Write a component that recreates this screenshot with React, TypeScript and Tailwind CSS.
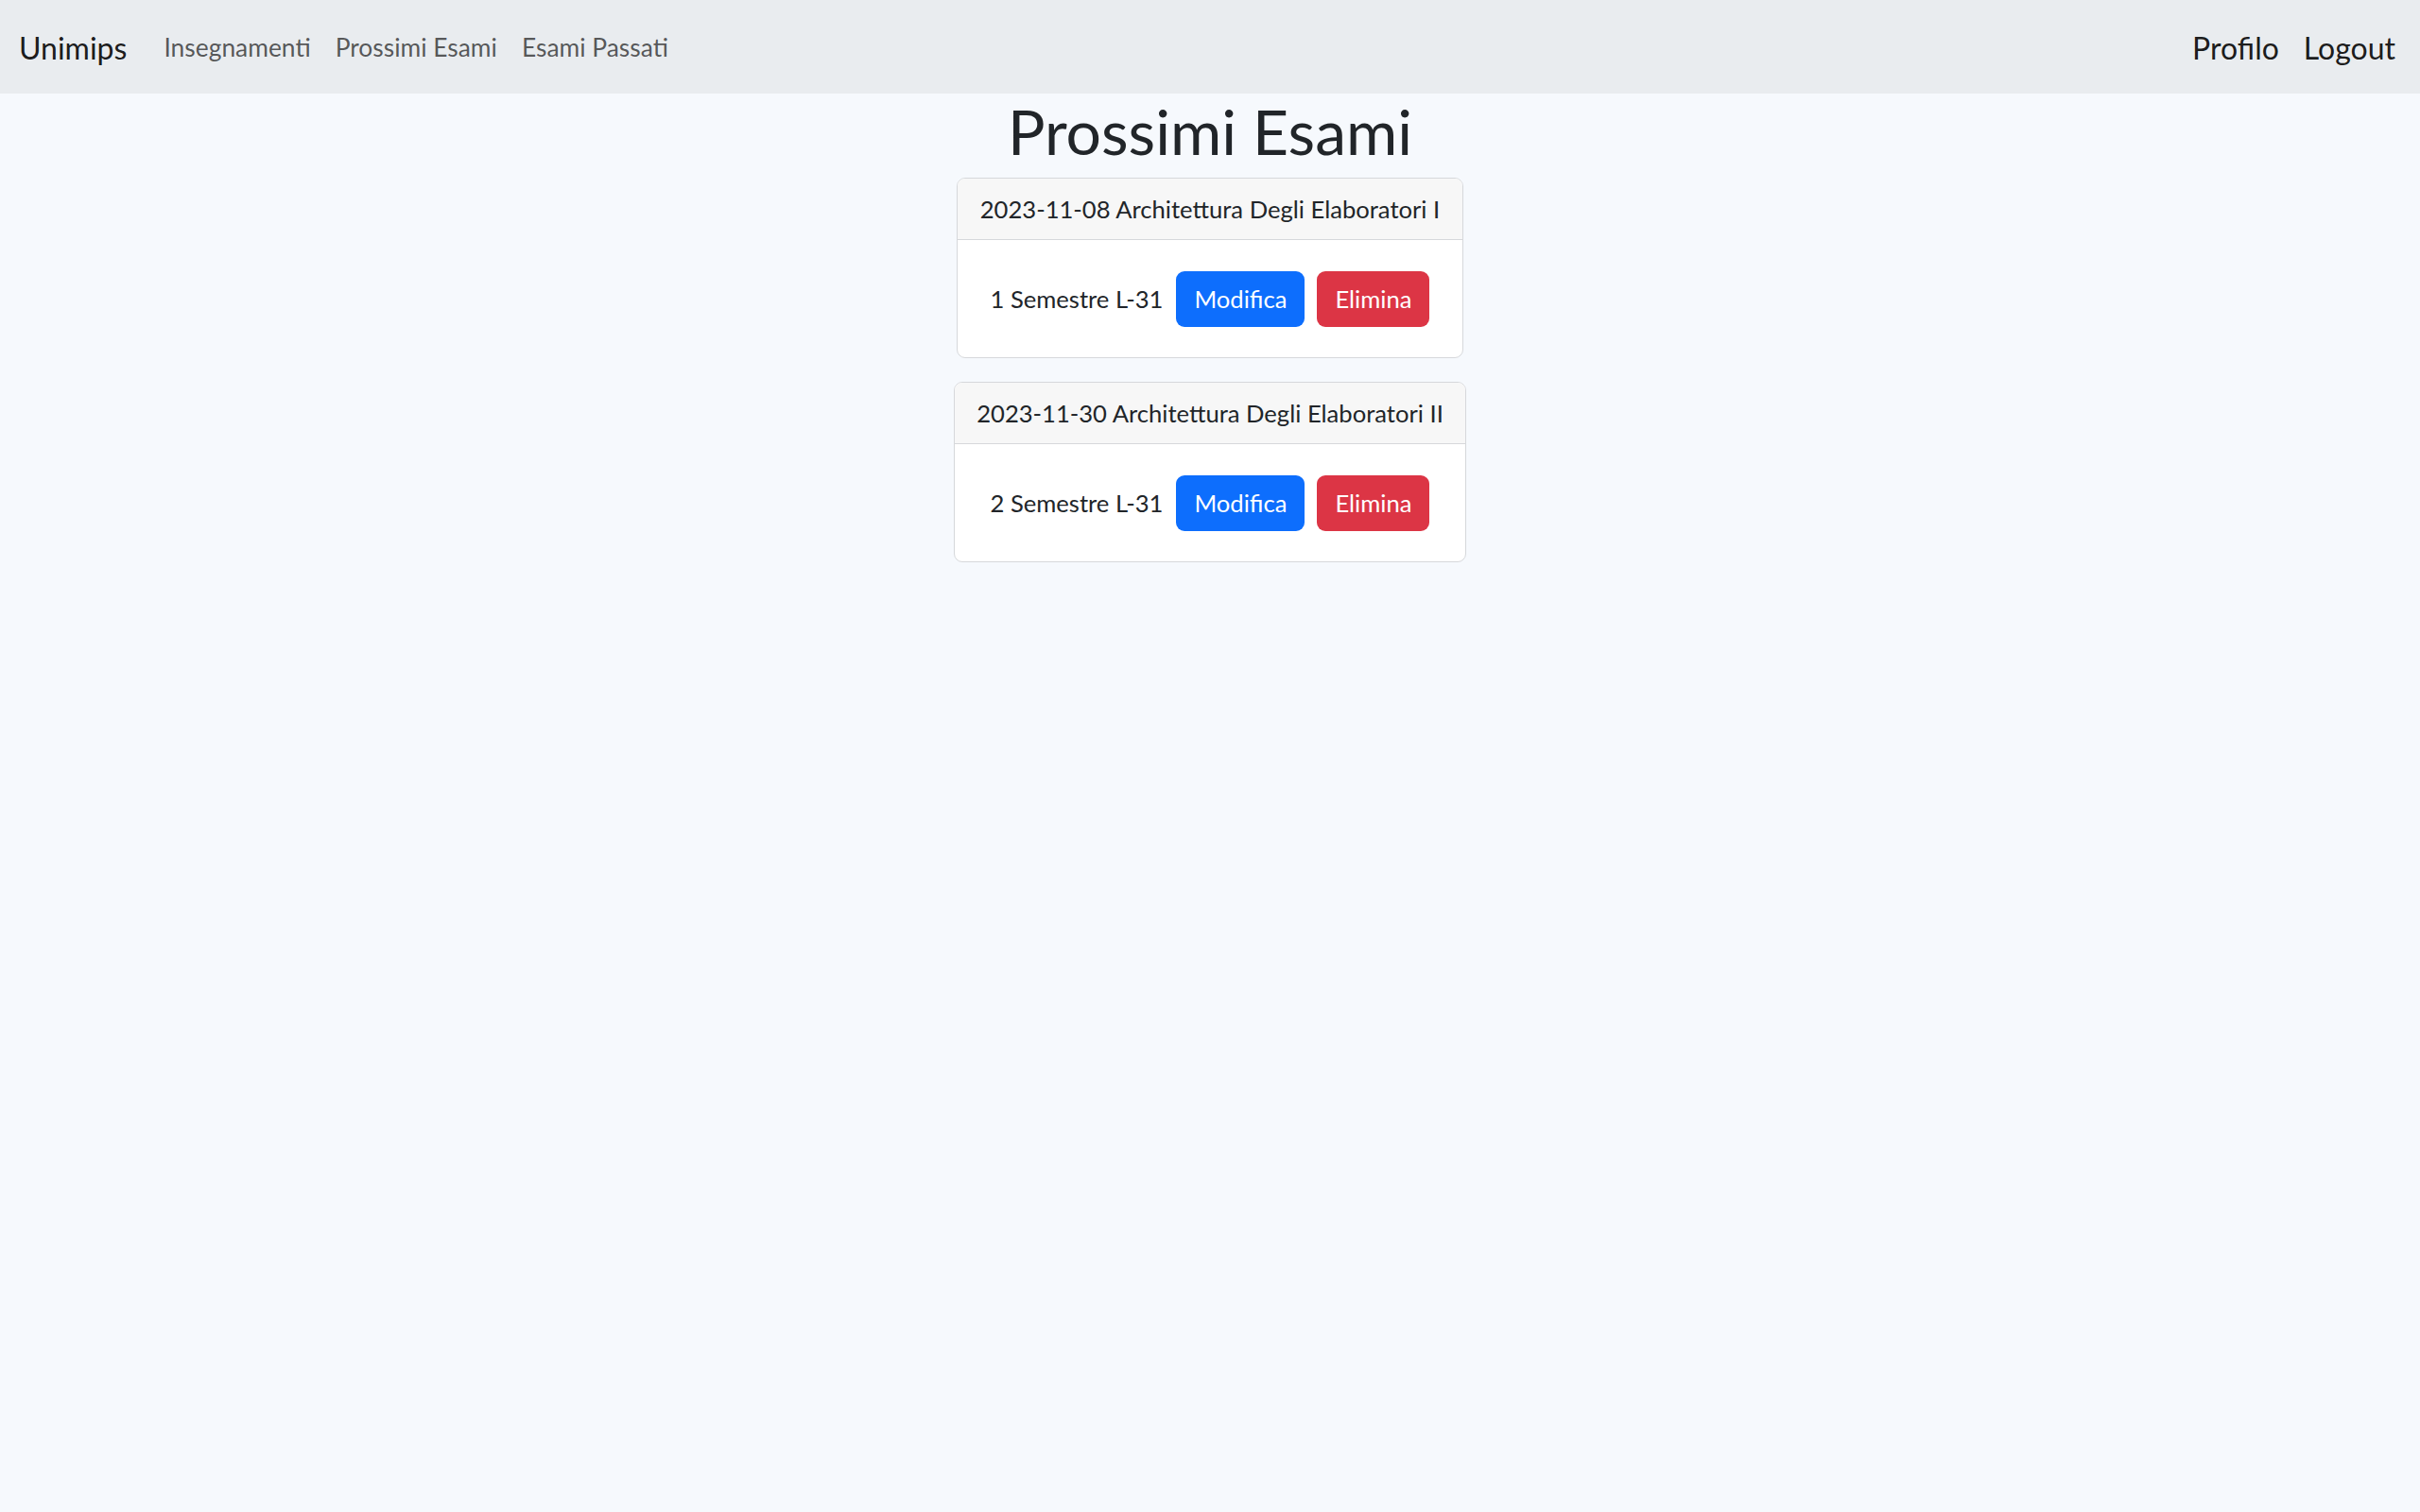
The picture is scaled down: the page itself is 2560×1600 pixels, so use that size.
const exams = [
  { date: '2023-11-08', name: 'Architettura Degli Elaboratori I', info: '1 Semestre L-31', w: 'w-[536px]' },
  { date: '2023-11-30', name: 'Architettura Degli Elaboratori II', info: '2 Semestre L-31', w: 'w-[542px]' },
]

const App = () => {
  return (
    <div className="min-h-screen bg-[#f6f9fd] text-[#212529] font-['Lato',sans-serif]">
      {/* navbar */}
      <nav className="h-[99px] bg-[#e9ecef] flex items-center justify-between pl-[20px] pr-[26px] pt-[2px]">
        <div className="flex items-center">
          <span className="text-[32px] text-black/90 mr-[26px]">Unimips</span>
          <div className="flex items-center text-[26.4px] text-black/65">
            <a className="px-[13px]">Insegnamenti</a>
            <a className="px-[13px]">Prossimi Esami</a>
            <a className="px-[13px]">Esami Passati</a>
          </div>
        </div>
        <div className="flex items-center gap-[26px] text-[32px] text-black/90">
          <a>Profilo</a>
          <a>Logout</a>
        </div>
      </nav>

      <main className="flex flex-col items-center">
        <h1 className="text-[66px] leading-[1.2] mb-[10px]">Prossimi Esami</h1>
        <div className="flex flex-col items-center gap-[25px]">
          {exams.map((e) => (
            <div key={e.date} className={`${e.w} bg-white border-[1.6px] border-[#d6d8db] rounded-[9px] overflow-hidden`}>
              <div className="h-[65px] flex items-center justify-center bg-[#f7f7f7] border-b-[1.6px] border-[#d6d8db] text-[25.6px]">
                {e.date} {e.name}
              </div>
              <div className="h-[124px] flex items-center justify-center text-[25.6px]">
                <span className="mr-[14px]">{e.info}</span>
                <button className="h-[59px] px-[19px] rounded-[9px] bg-[#0d6efd] text-white mr-[13px]">Modifica</button>
                <button className="h-[59px] px-[19px] rounded-[9px] bg-[#dc3545] text-white">Elimina</button>
              </div>
            </div>
          ))}
        </div>
      </main>
    </div>
  )
}

export default App
